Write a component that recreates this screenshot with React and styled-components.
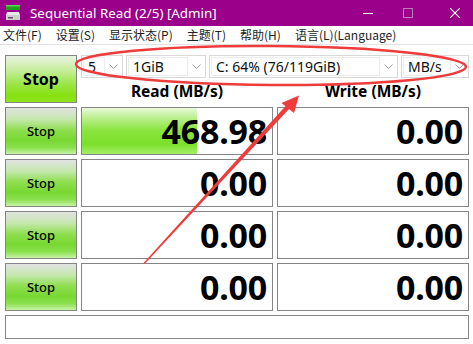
import React from "react";
import styled, { createGlobalStyle } from "styled-components";

const GlobalStyle = createGlobalStyle`
  html, body { margin: 0; padding: 0; background: #ffffff; overflow: hidden; }
  * { box-sizing: border-box; }
`;

const Window = styled.div`
  position: relative;
  width: 473px;
  height: 344px;
  background: #ffffff;
  font-family: "Noto Sans", "Open Sans", sans-serif;
  overflow: hidden;
`;

const TitleBar = styled.div`
  height: 26px;
  background: #9a0089;
  display: flex;
  align-items: center;
  color: #ffffff;
`;

const AppIcon = styled.svg`
  width: 16px;
  height: 16px;
  margin: 0 9px 0 5px;
  flex: none;
`;

const TitleText = styled.div`
  flex: 1;
  font-size: 13.4px;
  font-family: "Noto Sans", sans-serif;
  padding-bottom: 1px;
`;

const WinButton = styled.div`
  width: ${(p) => p.$w}px;
  height: 26px;
  display: flex;
  align-items: center;
  justify-content: center;
  color: ${(p) => (p.$disabled ? "#c27bbb" : "#ffffff")};
`;

const MenuBar = styled.div`
  height: 19px;
  display: flex;
  align-items: center;
  padding-left: 3px;
  gap: 14px;
  border-bottom: 1px solid #e2e2e2;
  font-family: "Noto Sans CJK SC", "Noto Sans", sans-serif;
  font-size: 12px;
  color: #222222;
`;

const MenuItem = styled.span`
  line-height: 18px;
`;

const Main = styled.div`
  display: grid;
  grid-template-columns: 72px 192px 192px;
  grid-template-rows: 48px repeat(4, 48px) 24px;
  column-gap: 4px;
  row-gap: 4px;
  padding: 10px 4px 0 5px;
`;

const StopButton = styled.div`
  border: 1px solid #858585;
  display: flex;
  align-items: center;
  justify-content: center;
  color: #000000;
  font-family: "Noto Sans", sans-serif;
  font-size: ${(p) => (p.$big ? "16px" : "13px")};
  font-weight: ${(p) => (p.$big ? 700 : 500)};
  background: ${(p) =>
    p.$big
      ? "linear-gradient(#e9f3e2 0%, #c8ee9e 30%, #9ce64a 60%, #86e010 85%, #8ee41c 100%)"
      : "linear-gradient(#e2e2e2 0%, #c4e8ac 25%, #8ede4e 48%, #78d832 70%, #8ae04c 86%, #c8f2a6 100%)"};
`;

const Controls = styled.div`
  grid-column: 2 / span 2;
  display: flex;
  flex-direction: column;
`;

const ComboRow = styled.div`
  height: 23px;
  display: flex;
  gap: 3px;
`;

const Combo = styled.div`
  width: ${(p) => p.$w}px;
  height: 23px;
  border: 1px solid #d9d9d9;
  background: #ffffff;
  display: flex;
  align-items: stretch;
  padding: 1px;
  font-family: "Noto Sans", sans-serif;
  font-size: 14px;
  color: #101010;
`;

const ComboText = styled.div`
  flex: 1;
  border: 1px solid #ececec;
  padding-left: 4px;
  display: flex;
  align-items: center;
  white-space: nowrap;
  overflow: hidden;
`;

const ComboArrow = styled.div`
  width: 16px;
  display: flex;
  align-items: center;
  justify-content: center;
`;

const HeaderRow = styled.div`
  flex: 1;
  display: grid;
  grid-template-columns: 192px 192px;
  column-gap: 4px;
  align-items: center;
`;

const Header = styled.div`
  text-align: center;
  font-family: "Noto Sans", sans-serif;
  font-weight: 700;
  font-size: 15.5px;
  color: #000000;
  padding-top: 1px;
`;

const ValueBox = styled.div`
  position: relative;
  border: 1px solid #858585;
  background: #ffffff;
  display: flex;
  align-items: center;
  justify-content: flex-end;
  padding-right: 5px;
  overflow: hidden;
`;

const Bar = styled.div`
  position: absolute;
  left: 0;
  top: 0;
  bottom: 0;
  background: linear-gradient(#eaf9dc 0%, #bdf092 20%, #8be440 48%, #7ce02a 78%, #a4ee68 100%);
`;

const Value = styled.span`
  position: relative;
  font-family: "Noto Sans", sans-serif;
  font-weight: 700;
  font-size: 34px;
  line-height: 1;
  color: #000000;
  letter-spacing: -0.2px;
`;

const StatusBar = styled.div`
  grid-column: 1 / span 3;
  border: 1px solid #858585;
  background: #ffffff;
`;

const Overlay = styled.svg`
  position: absolute;
  left: 0;
  top: 0;
  width: 473px;
  height: 344px;
  pointer-events: none;
`;

const Chevron = () => (
  <svg width="9" height="5" viewBox="0 0 9 5">
    <path d="M0.5 0.5 L4.5 4.5 L8.5 0.5" fill="none" stroke="#a0a0a0" strokeWidth="1" />
  </svg>
);

const rows = [
  { read: "468.98", write: "0.00", fill: 60.7 },
  { read: "0.00", write: "0.00", fill: 0 },
  { read: "0.00", write: "0.00", fill: 0 },
  { read: "0.00", write: "0.00", fill: 0 },
];

const combos = [
  { w: 42, text: "5" },
  { w: 80, text: "1GiB" },
  { w: 189, text: "C: 64% (76/119GiB)" },
  { w: 68, text: "MB/s" },
];

const menus = ["文件(F)", "设置(S)", "显示状态(P)", "主题(T)", "帮助(H)", "语言(L)(Language)"];

export default function App() {
  return (
    <Window>
      <GlobalStyle />
      <TitleBar>
        <AppIcon viewBox="0 0 16 16">
          <rect x="1" y="0" width="14" height="5" fill="#1e9e1e" />
          <rect x="1" y="0" width="14" height="1.5" fill="#5ad35a" />
          <path d="M2 7 H14 L15 10 V15 H1 V10 Z" fill="#e8e8e8" />
          <rect x="1" y="10" width="14" height="5" fill="#cfcfcf" />
          <rect x="3" y="12" width="5" height="1.5" fill="#555555" />
        </AppIcon>
        <TitleText>Sequential Read (2/5) [Admin]</TitleText>
        <WinButton $w={22}>
          <svg width="10" height="10" viewBox="0 0 10 10">
            <path d="M0 5.5 H10" stroke="currentColor" strokeWidth="1" />
          </svg>
        </WinButton>
        <WinButton $w={58} $disabled>
          <svg width="10" height="10" viewBox="0 0 10 10">
            <rect x="0.5" y="0.5" width="9" height="9" fill="none" stroke="currentColor" strokeWidth="1" />
          </svg>
        </WinButton>
        <WinButton $w={36}>
          <svg width="10" height="10" viewBox="0 0 10 10">
            <path d="M0 0 L10 10 M10 0 L0 10" stroke="currentColor" strokeWidth="1.1" />
          </svg>
        </WinButton>
      </TitleBar>
      <MenuBar>
        {menus.map((m) => (
          <MenuItem key={m}>{m}</MenuItem>
        ))}
      </MenuBar>
      <Main>
        <StopButton $big>Stop</StopButton>
        <Controls>
          <ComboRow>
            {combos.map((c) => (
              <Combo key={c.text} $w={c.w}>
                <ComboText>{c.text}</ComboText>
                <ComboArrow>
                  <Chevron />
                </ComboArrow>
              </Combo>
            ))}
          </ComboRow>
          <HeaderRow>
            <Header>Read (MB/s)</Header>
            <Header>Write (MB/s)</Header>
          </HeaderRow>
        </Controls>
        {rows.map((r, i) => (
          <React.Fragment key={i}>
            <StopButton>Stop</StopButton>
            <ValueBox>
              {r.fill > 0 && <Bar style={{ width: `${r.fill}%` }} />}
              <Value>{r.read}</Value>
            </ValueBox>
            <ValueBox>
              <Value>{r.write}</Value>
            </ValueBox>
          </React.Fragment>
        ))}
        <StatusBar />
      </Main>
      <Overlay viewBox="0 0 473 344">
        <ellipse cx="271" cy="65.5" rx="195" ry="19.5" fill="none" stroke="#ee3b3b" strokeWidth="2.5" transform="rotate(0.4 271 65.5)" />
        <polygon points="143.5,263 145,263.5 289.5,108.5 286,105.5" fill="#ee3b3b" />
        <polygon points="299,95.5 281.5,103 294,113" fill="#ee3b3b" />
      </Overlay>
    </Window>
  );
}
